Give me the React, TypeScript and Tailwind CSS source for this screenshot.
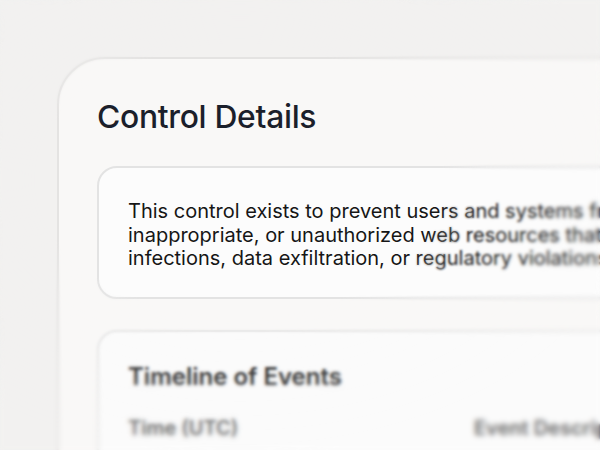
export default function App() {
  return (
    <div className="relative w-[600px] h-[450px] overflow-hidden bg-[#f2f1f0] font-['Inter','Liberation_Sans',sans-serif]">
      <div className="pl-[57px] pt-[57px]">
        <div className="w-[720px] h-[500px] rounded-tl-[48px] border-2 border-[#e4e3e2] bg-[#f9f8f7] pl-[38px] pt-[40px]">
          <h1 className="text-[31.8px] leading-[36px] font-medium text-[#1b1f2b] tracking-[-0.3px]">Control Details</h1>
          <div className="mt-[31px] w-[640px] rounded-[20px] border-2 border-[#e3e3e3] bg-[#fcfcfc] pl-[29px] pt-[32px] pb-[26px]">
            <p className="text-[20px] leading-[23.5px] text-[#161616] whitespace-nowrap">
              This control exists to prevent users and systems from accessing malicious,
              <br />
              inappropriate, or unauthorized web resources that could lead to malware
              <br />
              infections, data exfiltration, or regulatory violations.
            </p>
          </div>
          <div className="mt-[31px] w-[640px] h-[200px] rounded-[20px] border-2 border-[#e6e6e6] bg-[#fbfbfb] pl-[29px] pt-[31px]">
            <h2 className="text-[24px] leading-[28px] font-semibold text-[#383838]">Timeline of Events</h2>
            <div className="mt-[25px] flex text-[20px] leading-[24px] font-semibold text-[#666]">
              <span className="w-[346px]">Time (UTC)</span>
              <span>Event Description</span>
            </div>
          </div>
        </div>
      </div>
      <div className="pointer-events-none absolute inset-0 backdrop-blur-[0.8px] [mask-image:radial-gradient(ellipse_270px_180px_at_240px_180px,transparent_75%,black_92%)]" />
      <div className="pointer-events-none absolute inset-0 backdrop-blur-[1.5px] [mask-image:radial-gradient(ellipse_270px_180px_at_240px_180px,transparent_90%,black_118%)]" />
      <div className="pointer-events-none absolute inset-0 backdrop-blur-[2.2px] [mask-image:radial-gradient(ellipse_270px_180px_at_240px_180px,transparent_115%,black_155%)]" />
    </div>
  );
}
